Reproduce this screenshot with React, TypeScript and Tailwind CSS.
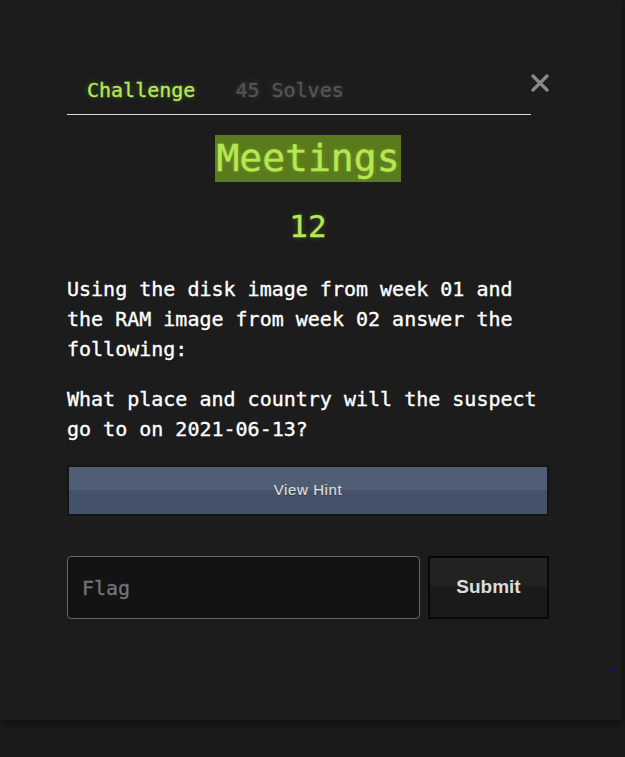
import React from 'react';

const mono = "font-['DejaVu_Sans_Mono','Liberation_Mono',monospace]";

export default function App() {
  return (
    <div className="min-h-[757px] bg-[#1b1b1b]">
      <div className={`relative w-[622px] h-[720px] bg-[#1c1c1c] shadow-[0_4px_10px_rgba(0,0,0,0.45)] pl-[67px] pr-[73px] pt-[75px] ${mono} [-webkit-text-stroke:0.35px_currentColor]`}>
        <div className="flex items-start">
          <div className="flex flex-1 border-b border-[#d8d8d8] pb-[9px]">
            <span className="px-[20px] text-[20px] leading-[30px] text-[#b5e853] [text-shadow:0_0_6px_rgba(181,232,83,0.35)]">
              Challenge
            </span>
            <span className="px-[20px] text-[20px] leading-[30px] text-[#555] [text-shadow:0_0_6px_rgba(120,120,120,0.4)]">
              45 Solves
            </span>
          </div>
          <button className="w-[18px] h-[20px] mt-[-2px] flex items-center justify-center text-[#888]">
            <svg width="18" height="18" viewBox="0 0 18 18">
              <path d="M2 2L16 16M16 2L2 16" stroke="currentColor" strokeWidth="3.2" strokeLinecap="round" />
            </svg>
          </button>
        </div>

        <div className="flex justify-center mt-[20px]">
          <h1 className="bg-[#5b7a1c] text-[#b5e853] text-[38px] leading-[47px] px-[1px] [text-shadow:0_0_4px_rgba(181,232,83,0.3)]">
            Meetings
          </h1>
        </div>

        <div className="text-center mt-[24px] text-[31px] leading-[40px] text-[#b5e853] [text-shadow:0_0_6px_rgba(181,232,83,0.3)]">
          12
        </div>

        <div className="mt-[28px] text-white text-[20px] leading-[30px]">
          <p>Using the disk image from week 01 and the RAM image from week 02 answer the following:</p>
          <p className="mt-[20px]">What place and country will the suspect go to on 2021-06-13?</p>
        </div>

        <button className="mt-[21px] w-full h-[51px] border-2 border-[#141414] bg-[linear-gradient(#4f5e75_0%,#4f5e75_50%,#45536a_50%,#45536a_100%)] font-['Liberation_Sans',Arial,sans-serif] [-webkit-text-stroke:0.2px_currentColor] text-[15px] tracking-[0.6px] text-[#dcdcdc] [text-shadow:0_1px_1px_rgba(0,0,0,0.4)]">
          View Hint
        </button>

        <div className="flex gap-[8px] mt-[40px]">
          <input
            placeholder="Flag"
            className="w-[353px] h-[63px] rounded-[4px] border border-[#666] bg-[#131313] px-[14px] text-[20px] text-white placeholder:text-[#6f747a] outline-none"
          />
          <button className="flex-1 h-[63px] border-2 border-[#080808] bg-[linear-gradient(#222_0%,#222_48%,#1a1a1a_48%,#1a1a1a_100%)] font-['Liberation_Sans',Arial,sans-serif] [-webkit-text-stroke:0px_currentColor] font-bold text-[19px] text-[#dcdcdc]">
            Submit
          </button>
        </div>

        <div className="absolute left-[611px] top-[669px] w-[3px] h-[3px] bg-[#0000ff]" />
      </div>
    </div>
  );
}
